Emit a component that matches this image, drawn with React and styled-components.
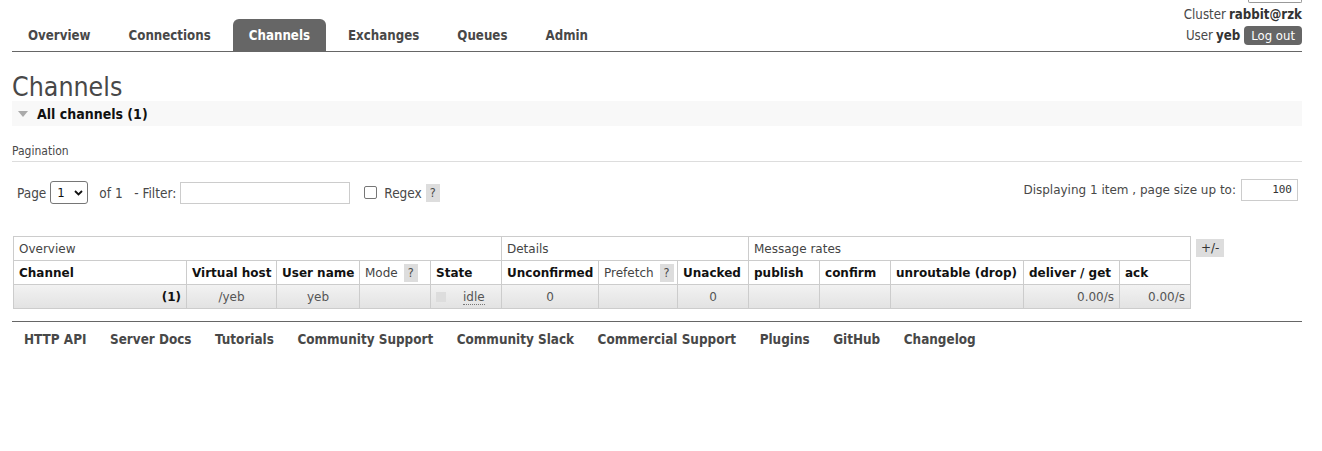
import React from 'react';
import styled, { createGlobalStyle } from 'styled-components';

const GlobalStyle = createGlobalStyle`
  html, body { margin: 0; padding: 0; background: #fff; }
  body {
    font-family: "DejaVu Sans", Verdana, sans-serif;
    font-size: 11px;
    color: #484848;
  }
`;

const Page = styled.div`
  margin: 0 20px 0 12px;
`;

const Header = styled.div`
  display: flex;
  justify-content: space-between;
  align-items: flex-end;
  border-bottom: 1px solid #666;
  height: 51px;
`;

const Tabs = styled.ul`
  display: flex;
  list-style: none;
  margin: 0;
  padding: 0;
  gap: 6px;
`;

const Tab = styled.li`
  height: 32px;
  line-height: 33px;
  padding: 0 16px;
  border-radius: 6px 6px 0 0;
  font-family: "DejaVu Sans Condensed", "DejaVu Sans", sans-serif;
  font-weight: bold;
  font-size: 13.2px;
  background: ${p => (p.$active ? '#666' : 'transparent')};
  color: ${p => (p.$active ? '#fff' : '#484848')};
`;

const Status = styled.div`
  display: flex;
  flex-direction: column;
  align-items: flex-end;
  align-self: stretch;
  font-family: "DejaVu Sans Condensed", "DejaVu Sans", sans-serif;
  font-size: 13.2px;
  color: #484848;
  b { color: #333; }
`;

const CutSelect = styled.div`
  width: 52px;
  height: 2px;
  border: 1px solid #999;
  border-top: none;
  border-radius: 0 0 2px 2px;
`;

const StatusLine = styled.div`
  display: flex;
  align-items: center;
  gap: 3px;
  height: ${p => p.$h}px;
  margin-top: ${p => p.$mt || 0}px;
`;

const LogOut = styled.button`
  font-family: "DejaVu Sans Condensed", "DejaVu Sans", sans-serif;
  font-size: 13px;
  color: #fff;
  background: #666;
  border: none;
  border-radius: 4px;
  height: 19px;
  padding: 0 7px;
  margin-left: 1px;
`;

const Title = styled.h1`
  font-family: "DejaVu Sans Condensed", "DejaVu Sans", sans-serif;
  font-weight: normal;
  font-size: 26.5px;
  color: #484848;
  margin: 20px 0 0;
  height: 29px;
  line-height: 29px;
`;

const SectionBar = styled.div`
  display: flex;
  align-items: center;
  gap: 9px;
  height: 25px;
  padding-left: 6px;
  background: #f8f8f8;
  font-family: "DejaVu Sans Condensed", "DejaVu Sans", sans-serif;
  font-weight: bold;
  font-size: 14px;
  color: #111;
`;

const Triangle = styled.span`
  width: 0;
  height: 0;
  border-left: 5px solid transparent;
  border-right: 5px solid transparent;
  border-top: 6px solid #aaa;
`;

const PaginationLabel = styled.div`
  margin-top: 18px;
  padding-bottom: 3px;
  border-bottom: 1px solid #ddd;
  font-family: "DejaVu Sans Condensed", "DejaVu Sans", sans-serif;
  font-size: 12px;
  color: #484848;
  height: 14px;
`;

const PagerRow = styled.div`
  display: flex;
  justify-content: space-between;
  align-items: center;
  height: 60px;
  padding-left: 5px;
`;

const PagerLeft = styled.div`
  display: flex;
  align-items: center;
  font-family: "DejaVu Sans Condensed", "DejaVu Sans", sans-serif;
  font-size: 13.5px;
  margin-top: 1px;
`;

const Select = styled.div`
  display: flex;
  align-items: center;
  justify-content: space-between;
  box-sizing: border-box;
  width: 38px;
  height: 23px;
  margin: 0 11px 0 4px;
  padding: 0 4px 0 6px;
  border: 1px solid #767676;
  border-radius: 3px;
  font-size: 13px;
  color: #111;
`;

const TextInput = styled.div`
  box-sizing: border-box;
  width: ${p => p.$w}px;
  height: ${p => p.$h || 22}px;
  border: 1px solid #ccc;
  margin-left: ${p => p.$ml || 0}px;
  font-family: "DejaVu Sans Mono", monospace;
  font-size: 11px;
  text-align: right;
  padding-right: 5px;
  line-height: 20px;
  color: #333;
`;

const Check = styled.span`
  box-sizing: border-box;
  width: 13px;
  height: 13px;
  border: 1px solid #767676;
  border-radius: 2px;
  margin: 0 7px 0 14px;
`;

const Help = styled.span`
  display: inline-block;
  background: #ddd;
  color: #484848;
  padding: 0 4px;
  margin-left: ${p => p.$ml || 4}px;
  line-height: 18px;
  font-family: "DejaVu Sans Condensed", "DejaVu Sans", sans-serif;
  font-size: 12.5px;
  font-weight: normal;
`;

const PagerRight = styled.div`
  display: flex;
  align-items: center;
  gap: 5px;
  margin-right: 4px;
  margin-top: -5px;
  font-size: 12px;
`;

const TableRow = styled.div`
  display: flex;
  align-items: flex-start;
  gap: 5px;
  margin-top: 14px;
`;

const Table = styled.table`
  border-collapse: collapse;
  margin-left: 1px;
  table-layout: fixed;
  width: 1177px;
  th, td {
    border: 1px solid #ccc;
    height: 23px;
    padding: 0 5px;
    white-space: nowrap;
    overflow: hidden;
  }
`;

const GroupTh = styled.th`
  text-align: left;
  font-weight: normal;
  font-size: 12px;
  color: #444;
`;

const ColTh = styled.th`
  text-align: left;
  font-weight: ${p => (p.$plain ? 'normal' : 'bold')};
  font-size: 12px;
  color: ${p => (p.$plain ? '#444' : '#111')};
`;

const BodyRow = styled.tr`
  background: linear-gradient(#f2f2f2, #e2e2e2);
`;

const Cell = styled.td`
  text-align: ${p => p.$align || 'center'};
  font-size: 12px;
  color: #555;
  font-weight: ${p => (p.$bold ? 'bold' : 'normal')};
  ${p => p.$bold && 'color: #111;'}
`;

const StateBox = styled.span`
  display: inline-block;
  width: 10px;
  height: 10px;
  background: #ddd;
  vertical-align: middle;
  margin-right: 17px;
`;

const Idle = styled.abbr`
  text-decoration: none;
  border-bottom: 1px dotted #777;
`;

const Toggle = styled.span`
  background: #ddd;
  color: #333;
  font-size: 12px;
  padding: 0 5px;
  line-height: 18px;
  margin-top: 3px;
`;

const Footer = styled.ul`
  display: flex;
  list-style: none;
  margin: 12px 0 0;
  padding: 7px 0 0 12px;
  gap: 23.5px;
  border-top: 1px solid #666;
  font-family: "DejaVu Sans Condensed", "DejaVu Sans", sans-serif;
  font-weight: bold;
  font-size: 13.4px;
  color: #484848;
  height: 20px;
  line-height: 21px;
`;

const tabs = ['Overview', 'Connections', 'Channels', 'Exchanges', 'Queues', 'Admin'];
const footerLinks = ['HTTP API', 'Server Docs', 'Tutorials', 'Community Support', 'Community Slack', 'Commercial Support', 'Plugins', 'GitHub', 'Changelog'];

const columns = [
  { label: 'Channel', w: 173 },
  { label: 'Virtual host', w: 90 },
  { label: 'User name', w: 83 },
  { label: 'Mode', w: 71, help: true },
  { label: 'State', w: 71 },
  { label: 'Unconfirmed', w: 97 },
  { label: 'Prefetch', w: 79, help: true },
  { label: 'Unacked', w: 71 },
  { label: 'publish', w: 71 },
  { label: 'confirm', w: 71 },
  { label: 'unroutable (drop)', w: 133 },
  { label: 'deliver / get', w: 96 },
  { label: 'ack', w: 71 },
];

export default function App() {
  return (
    <>
      <GlobalStyle />
      <Page>
        <Header>
          <Tabs>
            {tabs.map(t => (
              <Tab key={t} $active={t === 'Channels'}>{t}</Tab>
            ))}
          </Tabs>
          <Status>
            <CutSelect />
            <StatusLine $h={20} $mt={1}>Cluster <b>rabbit@rzk</b></StatusLine>
            <StatusLine $h={21} $mt={1}>User <b>yeb</b><LogOut>Log out</LogOut></StatusLine>
          </Status>
        </Header>

        <Title>Channels</Title>
        <SectionBar><Triangle />All channels (1)</SectionBar>

        <PaginationLabel>Pagination</PaginationLabel>
        <PagerRow>
          <PagerLeft>
            Page
            <Select>1
              <svg width="9" height="6" viewBox="0 0 9 6"><path d="M1 1l3.5 3.5L8 1" stroke="#111" strokeWidth="1.8" fill="none" /></svg>
            </Select>
            of 1&nbsp;&nbsp; - Filter:
            <TextInput $w={170} $ml={4} />
            <Check />
            Regex
            <Help>?</Help>
          </PagerLeft>
          <PagerRight>
            Displaying 1 item , page size up to:
            <TextInput $w={57} $h={22}>100</TextInput>
          </PagerRight>
        </PagerRow>

        <TableRow>
          <Table>
            <colgroup>
              {columns.map(c => <col key={c.label} style={{ width: c.w }} />)}
            </colgroup>
            <thead>
              <tr>
                <GroupTh colSpan={5}>Overview</GroupTh>
                <GroupTh colSpan={3}>Details</GroupTh>
                <GroupTh colSpan={5}>Message rates</GroupTh>
              </tr>
              <tr>
                {columns.map(c => (
                  <ColTh key={c.label} $plain={c.help}>
                    {c.label}{c.help && <Help $ml={6}>?</Help>}
                  </ColTh>
                ))}
              </tr>
            </thead>
            <tbody>
              <BodyRow>
                <Cell $align="right" $bold>(1)</Cell>
                <Cell>/yeb</Cell>
                <Cell>yeb</Cell>
                <Cell />
                <Cell $align="left"><StateBox /><Idle>idle</Idle></Cell>
                <Cell>0</Cell>
                <Cell />
                <Cell>0</Cell>
                <Cell />
                <Cell />
                <Cell />
                <Cell $align="right">0.00/s</Cell>
                <Cell $align="right">0.00/s</Cell>
              </BodyRow>
            </tbody>
          </Table>
          <Toggle>+/-</Toggle>
        </TableRow>

        <Footer>
          {footerLinks.map(l => <li key={l}>{l}</li>)}
        </Footer>
      </Page>
    </>
  );
}
